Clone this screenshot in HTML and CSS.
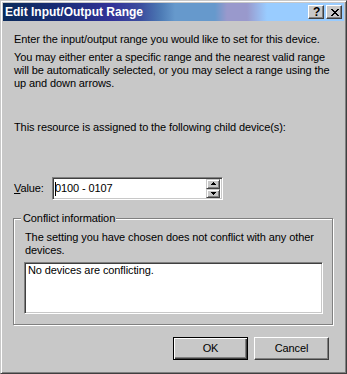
FILE: index.html
```html
<!DOCTYPE html>
<html>
<head>
<meta charset="utf-8">
<link rel="stylesheet" href="styles.css">
</head>
<body>
<div class="win">
  <div class="titlebar">
    <span class="title">Edit Input/Output Range</span>
    <div class="tbtns">
      <div class="tbtn help">?</div>
      <div class="tbtn close">
        <svg width="8" height="7" viewBox="0 0 8 7" shape-rendering="crispEdges">
          <path d="M0 0h2v1h-2z M6 0h2v1h-2z M1 1h2v1h-2z M5 1h2v1h-2z M2 2h4v1h-4z M3 3h2v1h-2z M2 4h4v1h-4z M1 5h2v1h-2z M5 5h2v1h-2z M0 6h2v1h-2z M6 6h2v1h-2z" fill="#000"/>
        </svg>
      </div>
    </div>
  </div>
  <div class="client">
    <p class="p1">Enter the input/output range you would like to set for this device.</p>
    <p class="p2">You may either enter a specific range and the nearest valid range will be automatically selected, or you may select a range using the up and down arrows.</p>
    <p class="p3">This resource is assigned to the following child device(s):</p>
    <div class="valrow">
      <label class="vlabel"><u>V</u>alue:</label>
      <div class="edit">
        <span class="caret"></span><span class="etext">0100 - 0107</span>
        <div class="spin">
          <div class="sbtn"><svg width="5" height="3" viewBox="0 0 5 3" shape-rendering="crispEdges"><path d="M2 0h1v1h-1z M1 1h3v1h-3z M0 2h5v1h-5z" fill="#000"/></svg></div>
          <div class="sbtn"><svg width="5" height="3" viewBox="0 0 5 3" shape-rendering="crispEdges"><path d="M0 0h5v1h-5z M1 1h3v1h-3z M2 2h1v1h-1z" fill="#000"/></svg></div>
        </div>
      </div>
    </div>
    <div class="group">
      <span class="legend">Conflict information</span>
      <p class="gtext">The setting you have chosen does not conflict with any other devices.</p>
      <div class="list">No devices are conflicting.</div>
    </div>
    <div class="buttons">
      <div class="btn default"><span>OK</span></div>
      <div class="btn"><span>Cancel</span></div>
    </div>
  </div>
</div>
</body>
</html>
```

FILE: styles.css
```css
html, body {
  margin: 0;
  padding: 0;
  background: #c8c8c8;
}
body {
  font-family: "Liberation Sans", Arial, sans-serif;
  font-size: 11px;
  line-height: 13px;
  letter-spacing: -0.1px;
  color: #000;
}
.win {
  width: 347px;
  height: 374px;
  box-sizing: border-box;
  background: #c8c8c8;
  border: 1px solid;
  border-color: #c8c8c8 #404040 #404040 #c8c8c8;
  box-shadow: inset 1px 1px #fff, inset -1px -1px #808080;
  padding: 2px;
  display: flex;
  flex-direction: column;
}
.titlebar {
  height: 18px;
  flex: none;
  display: flex;
  align-items: center;
  justify-content: space-between;
  background: linear-gradient(to right,
    #0a2a5a 0px, #1a2c78 60px, #333399 110px, #3b4e9e 138px,
    #4d7bb5 158px, #6699cc 172px, #6699cc 212px, #9999cc 224px,
    #9999cc 244px, #99ccff 264px, #99ccff 100%);
}
.title {
  color: #fff;
  font-weight: bold;
  font-size: 12px;
  letter-spacing: 0;
  padding-left: 2px;
  white-space: nowrap;
}
.tbtns {
  display: flex;
  gap: 2px;
  margin-right: 2px;
}
.tbtn {
  width: 16px;
  height: 14px;
  box-sizing: border-box;
  background: #c8c8c8;
  border: 1px solid;
  border-color: #fff #404040 #404040 #fff;
  box-shadow: inset -1px -1px #808080;
  display: flex;
  align-items: center;
  justify-content: center;
}
.help {
  font-weight: bold;
  font-size: 12px;
  line-height: 12px;
  padding-left: 1px;
}
.close svg {
  display: block;
  margin-left: 1px;
}
.client {
  flex: 1;
  padding: 12px 10px 0 10px;
  display: flex;
  flex-direction: column;
}
p {
  margin: 0;
}
.p1 {
  padding-left: 1px;
}
.p2 {
  margin-top: 5px;
  padding-left: 1px;
}
.p3 {
  margin-top: 31px;
  padding-left: 1px;
}
.valrow {
  margin-top: 43px;
  height: 23px;
  display: flex;
  align-items: center;
}
.vlabel {
  width: 39px;
  padding-left: 1px;
  box-sizing: border-box;
}
.edit {
  width: 171px;
  height: 23px;
  box-sizing: border-box;
  background: #fff;
  border: 1px solid;
  border-color: #808080 #fff #fff #808080;
  box-shadow: inset 1px 1px #404040, inset -1px -1px #c8c8c8;
  display: flex;
  align-items: center;
  padding: 0 2px 0 2px;
}
.caret {
  width: 1px;
  height: 14px;
  background: #000;
}
.etext {
  flex: 1;
  margin-left: -1px;
}
.spin {
  display: flex;
  flex-direction: column;
  align-self: stretch;
  padding: 1px 0;
}
.sbtn {
  width: 14px;
  height: 10px;
  box-sizing: border-box;
  background: #c8c8c8;
  border: 1px solid;
  border-color: #c8c8c8 #404040 #404040 #c8c8c8;
  box-shadow: inset 1px 1px #fff, inset -1px -1px #808080;
  display: flex;
  align-items: center;
  justify-content: center;
}
.sbtn svg {
  display: block;
}
.group {
  position: relative;
  margin-top: 18px;
  width: 320px;
  height: 107px;
  box-sizing: border-box;
  border: 1px solid #808080;
  box-shadow: inset 1px 1px #fff, 1px 1px #fff;
  padding: 12px 10px 0 11px;
}
.legend {
  position: absolute;
  top: -7px;
  left: 7px;
  padding: 0 1px 0 2px;
  background: #c8c8c8;
}
.list {
  margin-top: 5px;
  width: 299px;
  height: 52px;
  box-sizing: border-box;
  margin-left: -1px;
  background: #fff;
  border: 1px solid;
  border-color: #808080 #fff #fff #808080;
  box-shadow: inset 1px 1px #404040, inset -1px -1px #c8c8c8;
  padding: 1px 3px;
}
.buttons {
  margin-top: 12px;
  display: flex;
  justify-content: flex-end;
  gap: 6px;
  padding-right: 5px;
}
.btn {
  width: 75px;
  height: 23px;
  box-sizing: border-box;
  background: #c8c8c8;
  border: 1px solid;
  border-color: #fff #404040 #404040 #fff;
  box-shadow: inset -1px -1px #808080;
  display: flex;
  align-items: center;
  justify-content: center;
}
.btn.default {
  border: 1px solid #000;
  box-shadow: inset 1px 1px #fff, inset -1px -1px #404040, inset -2px -2px #808080;
}
```
